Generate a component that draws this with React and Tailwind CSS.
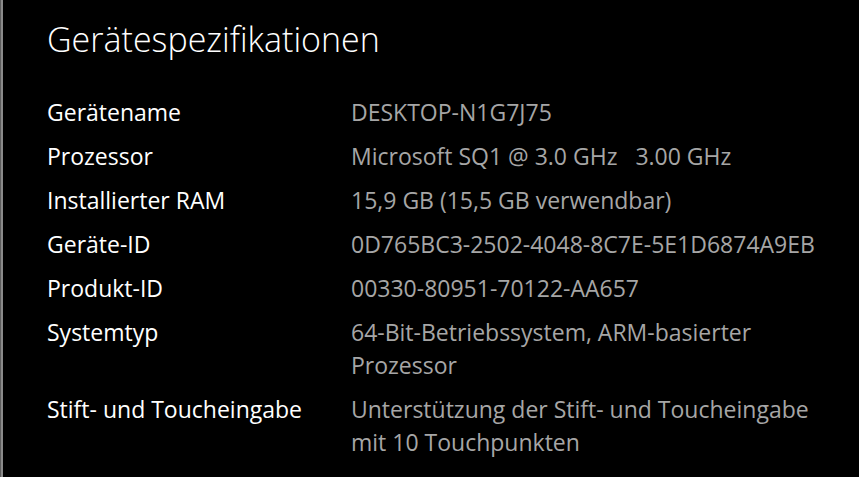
import React from "react";

const rows = [
  ["Gerätename", ["DESKTOP-N1G7J75"]],
  ["Prozessor", ["Microsoft SQ1 @ 3.0 GHz\u00a0\u00a0\u00a03.00 GHz"]],
  ["Installierter RAM", ["15,9 GB (15,5 GB verwendbar)"]],
  ["Geräte-ID", ["0D765BC3-2502-4048-8C7E-5E1D6874A9EB"]],
  ["Produkt-ID", ["00330-80951-70122-AA657"]],
  ["Systemtyp", ["64-Bit-Betriebssystem, ARM-basierter", "Prozessor"]],
  ["Stift- und Toucheingabe", ["Unterstützung der Stift- und Toucheingabe", "mit 10 Touchpunkten"]],
];

export default function App() {
  return (
    <div className="flex h-[477px] w-[859px] overflow-hidden bg-black" style={{ fontFamily: '"Open Sans", "Noto Sans", sans-serif' }}>
      <div className="w-[1px] bg-[#5c5c5c]" />
      <div className="w-[2px] bg-[#8a8a8a]" />
      <div className="flex flex-col pl-[44px] pt-[18px]">
        <h1 className="text-[34px] font-light leading-[42px] text-white">Gerätespezifikationen</h1>
        <div className="mt-[36px] flex flex-col gap-[11px]">
          {rows.map(([label, value]) => (
            <div key={label} className="flex text-[23px] leading-[33px]">
              <div className="w-[304px] shrink-0 text-white">{label}</div>
              <div className="text-[#a6a6a6]">
                {value.map((l, i) => (
                  <div key={i} className="whitespace-nowrap">{l}</div>
                ))}
              </div>
            </div>
          ))}
        </div>
      </div>
    </div>
  );
}
